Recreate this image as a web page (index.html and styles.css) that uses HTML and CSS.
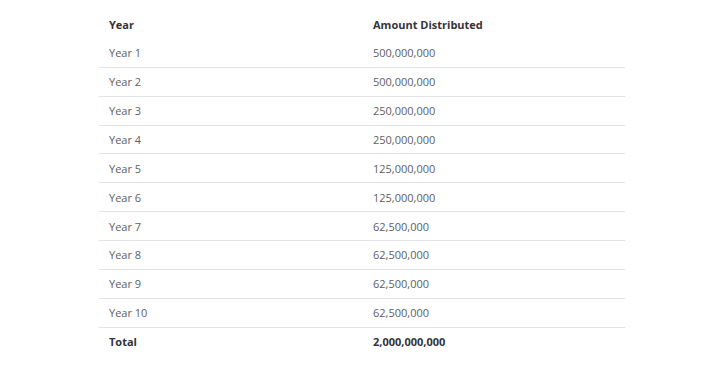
FILE: index.html
```html
<!DOCTYPE html>
<html>
<head>
<meta charset="utf-8">
<link rel="stylesheet" href="styles.css">
</head>
<body>
<div class="wrap">
<table class="dist">
<thead>
<tr><th>Year</th><th>Amount Distributed</th></tr>
</thead>
<tbody>
<tr><td>Year 1</td><td>500,000,000</td></tr>
<tr><td>Year 2</td><td>500,000,000</td></tr>
<tr><td>Year 3</td><td>250,000,000</td></tr>
<tr><td>Year 4</td><td>250,000,000</td></tr>
<tr><td>Year 5</td><td>125,000,000</td></tr>
<tr><td>Year 6</td><td>125,000,000</td></tr>
<tr><td>Year 7</td><td>62,500,000</td></tr>
<tr><td>Year 8</td><td>62,500,000</td></tr>
<tr><td>Year 9</td><td>62,500,000</td></tr>
<tr><td>Year 10</td><td>62,500,000</td></tr>
</tbody>
<tfoot>
<tr><th>Total</th><th>2,000,000,000</th></tr>
</tfoot>
</table>
</div>
</body>
</html>
```
FILE: styles.css
```css
html, body {
  margin: 0;
  padding: 0;
  background: #fff;
}
.wrap {
  padding: 11px 95px 0 99px;
}
.dist {
  width: 526px;
  border-collapse: collapse;
  font-family: "Open Sans", sans-serif;
  font-size: 11px;
  color: #5f6062;
}
.dist th, .dist td {
  text-align: left;
  padding: 0 10px;
  height: 27.89px;
  line-height: 15px;
  vertical-align: middle;
}
.dist th:first-child, .dist td:first-child {
  width: 244px;
}
.dist th {
  font-weight: 700;
  color: #333438;
}
.dist tbody tr {
  border-bottom: 1px solid #dfe2e7;
}
```
